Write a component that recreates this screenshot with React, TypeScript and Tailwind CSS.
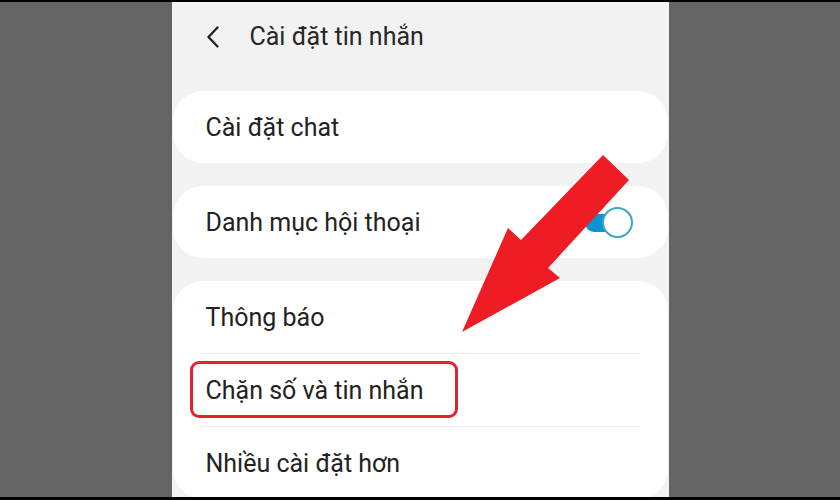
import React from "react";

const font = { fontFamily: "Roboto, 'Noto Sans', sans-serif" };

function Toggle() {
  return (
    <div className="relative h-[32px] w-[48px]">
      <div className="absolute top-[8px] left-0 h-[18px] w-[44px] rounded-full bg-[#0f94d3]" />
      <div className="absolute top-[1px] right-0 h-[31px] w-[31px] rounded-full border-2 border-[#3ba6c6] bg-white" />
    </div>
  );
}

function Row({ label, children }: { label: string; children?: React.ReactNode }) {
  return (
    <div className="relative flex h-[72px] items-center justify-between pr-[35px] pl-[33px]">
      <span className="pt-[2px] text-[25px] text-[#222]">{label}</span>
      {children}
    </div>
  );
}

export default function App() {
  return (
    <div
      className="relative flex h-[500px] w-[840px] justify-center overflow-hidden border-t-2 border-b-[3px] border-black bg-[#646464]"
      style={font}
    >
      <div className="flex w-[497px] flex-col bg-[#f2f2f2] px-[1px]">
        {/* Header */}
        <div className="flex h-[70px] shrink-0 items-center pl-[33px]">
          <svg width="14" height="22" viewBox="0 0 14 22" className="mr-[30px]">
            <polyline
              points="11.5,1.5 2.5,11 11.5,20.5"
              fill="none"
              stroke="#222"
              strokeWidth="2.4"
              strokeLinecap="round"
              strokeLinejoin="round"
            />
          </svg>
          <span className="text-[25px] text-[#262626]">Cài đặt tin nhắn</span>
        </div>

        <div className="mt-[19px] flex flex-col gap-[23px]">
          <div className="rounded-[30px] bg-white">
            <Row label="Cài đặt chat" />
          </div>

          <div className="rounded-[30px] bg-white">
            <Row label="Danh mục hội thoại">
              <Toggle />
            </Row>
          </div>

          <div className="rounded-[30px] bg-white">
            <Row label="Thông báo" />
            <div className="mx-[28px] h-px bg-[#ececec]" />
            <Row label="Chặn số và tin nhắn">
              <div className="absolute top-[7px] left-[17px] h-[57px] w-[268px] rounded-[9px] border-[3px] border-[#e1232f]" />
            </Row>
            <div className="mx-[28px] h-px bg-[#ececec]" />
            <Row label="Nhiều cài đặt hơn" />
          </div>
        </div>
      </div>

      {/* Red arrow overlay */}
      <svg
        className="pointer-events-none absolute -top-[2px] left-0 h-[500px] w-[840px]"
        viewBox="0 0 840 500"
      >
        <polygon
          points="603,155 629,180 548,268 560,278 462,332 508,228 521,240"
          fill="#ee1c25"
        />
      </svg>
    </div>
  );
}
